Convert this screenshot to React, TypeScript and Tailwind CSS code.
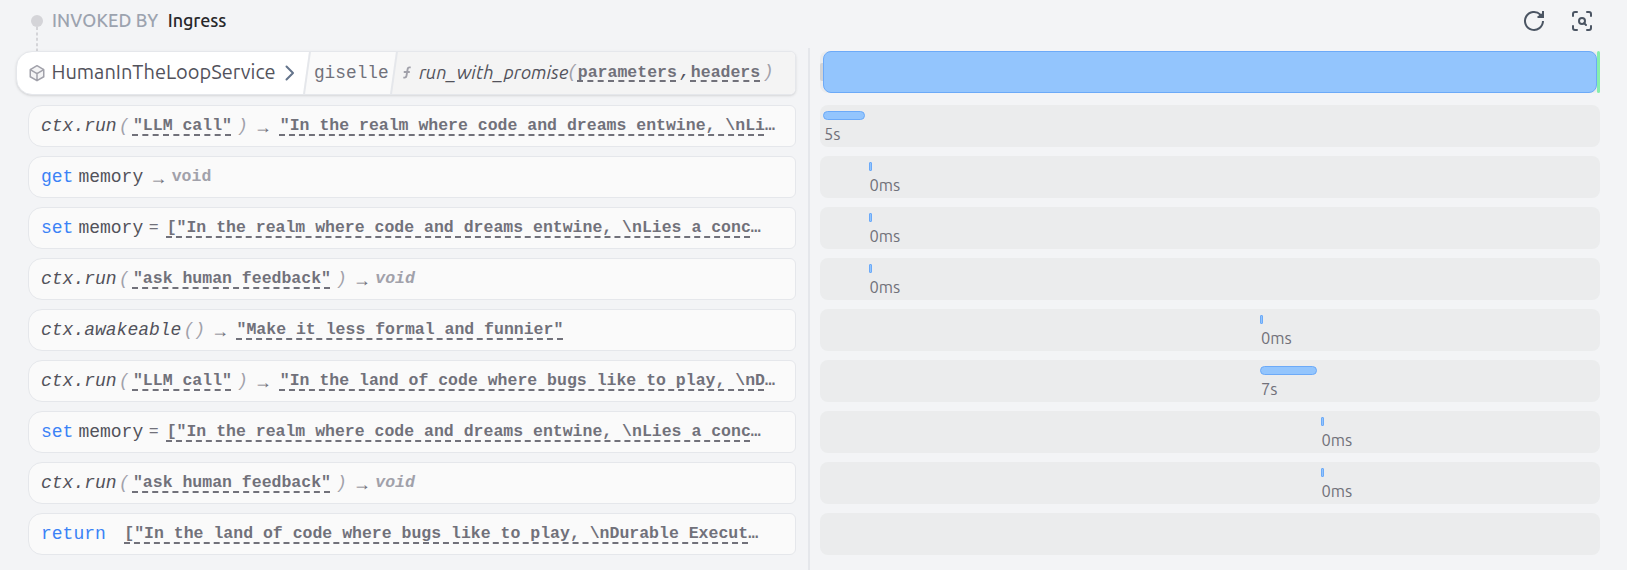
import React from "react";

const MONO = "font-['Liberation_Mono',monospace]";
const SANS = "font-['Ubuntu','Noto_Sans',sans-serif]";

function Value({ text, more = false, className = "" }: { text: string; more?: boolean; className?: string }) {
  return (
    <span className={`whitespace-pre text-[16.5px] leading-6 font-bold text-[#71717a] ${className}`}>
      <span className="underline decoration-dashed decoration-2 underline-offset-4">{text}</span>
      {more && "…"}
    </span>
  );
}

function Arrow() {
  return <span className="ml-[6px] w-[18px] font-['Ubuntu','Noto_Sans',sans-serif] text-[18px] text-[#71717a]">→</span>;
}

function Void({ italic = false }: { italic?: boolean }) {
  return <span className={`ml-[4.5px] text-[16.5px] font-bold text-[#a1a1aa] ${italic ? "italic" : ""}`}>void</span>;
}

function Call({ name, arg, children }: { name: string; arg?: string; children: React.ReactNode }) {
  return (
    <>
      <span className="text-[#52525b] italic">{name}</span>
      <span className="ml-[2px] text-[#a1a1aa] italic">(</span>
      {arg && <Value text={arg} className="ml-[3.5px]" />}
      <span className={`text-[#a1a1aa] italic ${arg ? "ml-[5px]" : ""}`}>)</span>
      <Arrow />
      {children}
    </>
  );
}

function SetState({ value }: { value: string }) {
  return (
    <>
      <span className="text-[#3b82f6]">set</span>
      <span className="ml-[5px] text-[#52525b]">memory</span>
      <span className="ml-[5.5px] text-[16.5px] text-[#71717a]">=</span>
      <Value text={value} more className="ml-[8px]" />
    </>
  );
}

type Entry = { body: React.ReactNode; at?: number; width?: number; label?: string; shift?: number };

const POEM = '["In the realm where code and dreams entwine, \\nLies a conc';

const ENTRIES: Entry[] = [
  {
    body: (
      <Call name="ctx.run" arg={'"LLM call"'}>
        <Value text={'"In the realm where code and dreams entwine, \\nLi'} more className="ml-[8px]" />
      </Call>
    ),
    at: 3, width: 42, label: "5s", shift: 1,
  },
  {
    body: (
      <>
        <span className="text-[#3b82f6]">get</span>
        <span className="ml-[5px] text-[#52525b]">memory</span>
        <Arrow />
        <Void />
      </>
    ),
    at: 49, width: 3, label: "0ms", shift: 0.4,
  },
  { body: <SetState value={POEM} />, at: 49, width: 3, label: "0ms", shift: 0.4 },
  {
    body: (
      <Call name="ctx.run" arg={'"ask human feedback"'}>
        <Void italic />
      </Call>
    ),
    at: 49, width: 3, label: "0ms", shift: 0.4,
  },
  {
    body: (
      <Call name="ctx.awakeable">
        <Value text={'"Make it less formal and funnier"'} className="ml-[7.5px]" />
      </Call>
    ),
    at: 440, width: 3, label: "0ms", shift: 1,
  },
  {
    body: (
      <Call name="ctx.run" arg={'"LLM call"'}>
        <Value text={'"In the land of code where bugs like to play, \\nD'} more className="ml-[8px]" />
      </Call>
    ),
    at: 440, width: 57, label: "7s", shift: 1,
  },
  { body: <SetState value={POEM} />, at: 501, width: 3, label: "0ms", shift: 0.4 },
  {
    body: (
      <Call name="ctx.run" arg={'"ask human feedback"'}>
        <Void italic />
      </Call>
    ),
    at: 501, width: 3, label: "0ms", shift: 0.4,
  },
  {
    body: (
      <>
        <span className="text-[#3b82f6]">return</span>
        <Value text={'["In the land of code where bugs like to play, \\nDurable Execut'} more className="ml-[18.5px]" />
      </>
    ),
  },
];

function Header() {
  return (
    <header className="flex h-12 items-start pt-[9px] pr-[33px] pl-[31px] text-[18px] leading-6 font-medium">
      <div className="flex w-3 flex-col items-center pt-[6px]">
        <span className="size-3 shrink-0 rounded-full bg-[#d4d4d8]" />
        <svg viewBox="0 0 2 24" className="h-6 w-[2px] stroke-[#d4d4d8] stroke-2">
          <path d="M1 0V24" strokeDasharray="3 2.4" />
        </svg>
      </div>
      <span className="-mt-px ml-[9px] tracking-[0.15px] text-[#9ca3af]">INVOKED BY</span>
      <span className="-mt-px ml-[9.5px] tracking-[-0.1px] text-[#27272a]">Ingress</span>
      <div className="ml-auto flex gap-6 text-[#4b5563]">
        <svg viewBox="0 0 24 24" className="size-6 fill-none stroke-current stroke-2">
          <path d="M21 12A9 9 0 1 1 18.4 5.6L20.4 7.6" />
          <path d="M21 2V8H15.5M20.7 5.2L17 7.3" />
        </svg>
        <svg viewBox="0 0 24 24" className="size-6 fill-none stroke-current stroke-2" strokeLinecap="round" strokeLinejoin="round">
          <path d="M3 7V5a2 2 0 0 1 2-2h2M17 3h2a2 2 0 0 1 2 2v2M21 17v2a2 2 0 0 1-2 2h-2M7 21H5a2 2 0 0 1-2-2v-2" />
          <circle cx="12" cy="12" r="3" />
          <path d="m16 16-1.9-1.9" />
        </svg>
      </div>
    </header>
  );
}

function Target() {
  return (
    <div className="ml-4 flex h-11 w-[780px] overflow-hidden rounded-l-[16px] rounded-r-md border border-[#e5e7eb] bg-white shadow-sm">
      <div className={`flex w-[289px] shrink-0 items-center pl-[11px] text-[20px] text-[#52525b] ${SANS}`}>
        <svg viewBox="0 0 24 24" className="size-[18px] shrink-0 fill-[#f4f4f5] stroke-[#a1a1aa] stroke-2" strokeLinejoin="round" strokeLinecap="round">
          <path d="M21 7.5 12 2.2 3 7.5v9.5l9 5.2 9-5.2zM3 7.5l9 5.2 9-5.2M12 12.7v9.5" />
        </svg>
        <span className="-mt-[2px] ml-[5.5px]">HumanInTheLoopService</span>
        <svg viewBox="0 0 10 16" className="ml-auto mr-[11px] h-4 w-[10px] shrink-0 fill-none stroke-[#64748b] stroke-2">
          <path d="m1.5 1.5 6.5 6.5-6.5 6.5" strokeLinecap="round" strokeLinejoin="round" />
        </svg>
      </div>
      <div className="flex w-[87px] shrink-0 -skew-x-[8deg] items-center border-l-2 border-[#e5e7eb] bg-[#fafafa]">
        <span className={`ml-[6px] skew-x-[8deg] text-[17.8px] text-[#71717a] ${MONO}`}>giselle</span>
      </div>
      <div className="-mr-4 flex flex-1 -skew-x-[8deg] items-center border-l-2 border-[#e5e7eb] bg-[#f4f4f4]">
        <div className={`flex skew-x-[8deg] items-center text-[18px] ${MONO}`}>
          <svg viewBox="0 0 10 14" className="ml-[7px] h-[13px] w-[10px] fill-none stroke-[#a1a1aa] stroke-2">
            <path d="M9 1.5H7.6Q6 1.5 5.7 3.2L4.4 10.8Q4.1 12.5 2.5 12.5H1M1.5 6.5H8" />
          </svg>
          <span className={`ml-[7px] w-[148px] text-[18.6px] text-[#52525b] italic ${SANS}`}>run_with_promise</span>
          <span className="text-[#a1a1aa] italic">(</span>
          <Value text="parameters" />
          <span className="w-[14px] pl-[3px] text-[#52525b] italic">,</span>
          <Value text="headers" />
          <span className="ml-[2.5px] text-[#a1a1aa] italic">)</span>
        </div>
      </div>
    </div>
  );
}

function Track({ entry }: { entry: Entry }) {
  const instant = (entry.width ?? 0) <= 3;
  return (
    <div className="h-[42px] rounded-lg bg-[#ebeced] pt-[6px]">
      {entry.label && (
        <div style={{ marginLeft: entry.at }}>
          <div
            className={`h-[9px] border border-[#6caaf8] bg-[#93c5fd] ${instant ? "rounded-[1px]" : "rounded-full"}`}
            style={{ width: entry.width }}
          />
          <div className="text-[16.5px] leading-[28px] text-[#71717a]" style={{ paddingLeft: entry.shift }}>
            {entry.label}
          </div>
        </div>
      )}
    </div>
  );
}

export default function App() {
  return (
    <div className={`h-[570px] w-[1627px] overflow-hidden bg-[#f3f4f6] ${SANS}`}>
      <Header />
      <main className="flex h-[522px]">
        <section className="flex w-[808px] shrink-0 flex-col pt-[3px]">
          <Target />
          <div className="mt-[10px] ml-7 flex w-[768px] flex-col gap-[9px]">
            {ENTRIES.map((entry, i) => (
              <div
                key={i}
                className={`flex h-[42px] items-center rounded-l-[14px] rounded-r-md border border-[#e5e7eb] bg-[#fafafa] pl-3 text-[18px] whitespace-pre ${MONO}`}
              >
                {entry.body}
              </div>
            ))}
          </div>
        </section>
        <section className="flex w-[792px] flex-col border-l-2 border-[#e5e7eb] pt-[3px] pl-[10px]">
          <div className="flex h-[42px] items-center rounded-lg bg-[#ebeced]">
            <span className="h-[18px] w-[3px] rounded-l-xs bg-[#d1d3d6]" />
            <span className="h-full flex-1 rounded-lg border border-[#6caaf8] bg-[#93c5fd]" />
            <span className="h-full w-[3px] rounded-xs bg-[#86efac]" />
          </div>
          <div className="mt-3 flex flex-col gap-[9px]">
            {ENTRIES.map((entry, i) => (
              <Track key={i} entry={entry} />
            ))}
          </div>
        </section>
      </main>
    </div>
  );
}
